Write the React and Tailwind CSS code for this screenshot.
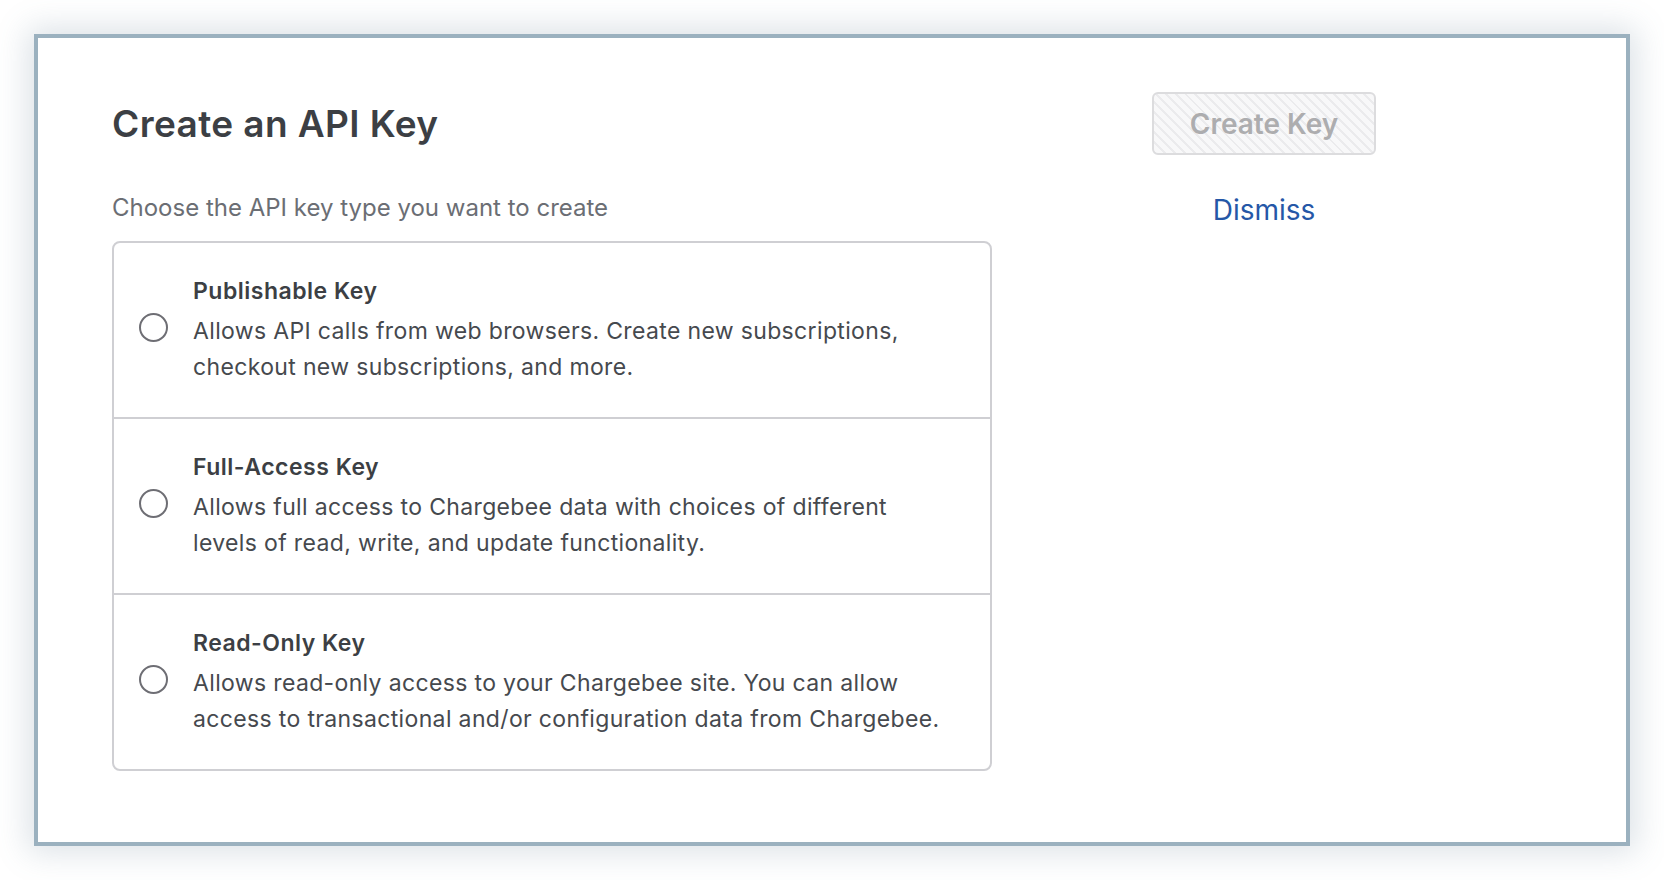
import React, { useState } from 'react'

const keyTypes = [
  {
    id: 'publishable',
    title: 'Publishable Key',
    lines: ['Allows API calls from web browsers. Create new subscriptions,', 'checkout new subscriptions, and more.'],
  },
  {
    id: 'full',
    title: 'Full-Access Key',
    lines: ['Allows full access to Chargebee data with choices of different', 'levels of read, write, and update functionality.'],
  },
  {
    id: 'readonly',
    title: 'Read-Only Key',
    lines: ['Allows read-only access to your Chargebee site. You can allow', 'access to transactional and/or configuration data from Chargebee.'],
  },
]

const App = () => {
  const [selected, setSelected] = useState(null)

  return (
    <div className="w-[1664px] h-[880px] bg-white p-[34px] font-['Inter',sans-serif]">
      <div className="h-[812px] bg-white border-4 border-[#9bb1bf] shadow-[0_0_30px_6px_rgba(90,120,140,0.22)] flex pl-[74px] pr-[250px]">
        {/* Left column */}
        <div className="w-[880px] pt-[64px]">
          <h1 className="text-[37px] leading-[44px] font-semibold text-[#3c3f44] tracking-[0.4px]">Create an API Key</h1>
          <p className="mt-[46px] text-[24px] leading-[32px] text-[#6b6e74]">Choose the API key type you want to create</p>

          <div className="mt-[17px] border-2 border-[#cfcfd3] rounded-lg bg-white">
            {keyTypes.map((k, i) => (
              <label
                key={k.id}
                onClick={() => setSelected(k.id)}
                className={`flex items-start pl-[25px] pt-[34px] pb-[32px] cursor-pointer ${i > 0 ? 'border-t-2 border-[#cfcfd3]' : ''}`}
              >
                <span className="mt-[36px] w-[29px] h-[29px] rounded-full border-2 border-[#6e6e74] flex items-center justify-center shrink-0">
                  {selected === k.id && <span className="w-[13px] h-[13px] rounded-full bg-[#2557a7]"></span>}
                </span>
                <div className="ml-[25px]">
                  <div className="text-[23px] leading-[28px] font-semibold text-[#3c3f44] tracking-[0.5px]">{k.title}</div>
                  <div className="mt-2 text-[23px] leading-[36px] text-[#46494e] tracking-[0.35px] whitespace-nowrap">
                    {k.lines[0]}
                    <br />
                    {k.lines[1]}
                  </div>
                </div>
              </label>
            ))}
          </div>
        </div>

        {/* Right column */}
        <div className="ml-auto w-[224px] pt-[54px] flex flex-col items-center">
          <button
            disabled
            className="w-[224px] h-[63px] border-2 border-[#dcdcde] rounded-md text-[28px] font-semibold text-[#adadaf] bg-[image:repeating-linear-gradient(45deg,#ebebed_0px,#ebebed_2px,#f8f8f9_2px,#f8f8f9_7px)]"
          >
            Create Key
          </button>
          <a href="#" className="mt-[38px] text-[28px] leading-[34px] text-[#2557a7]">Dismiss</a>
        </div>
      </div>
    </div>
  )
}

export default App
